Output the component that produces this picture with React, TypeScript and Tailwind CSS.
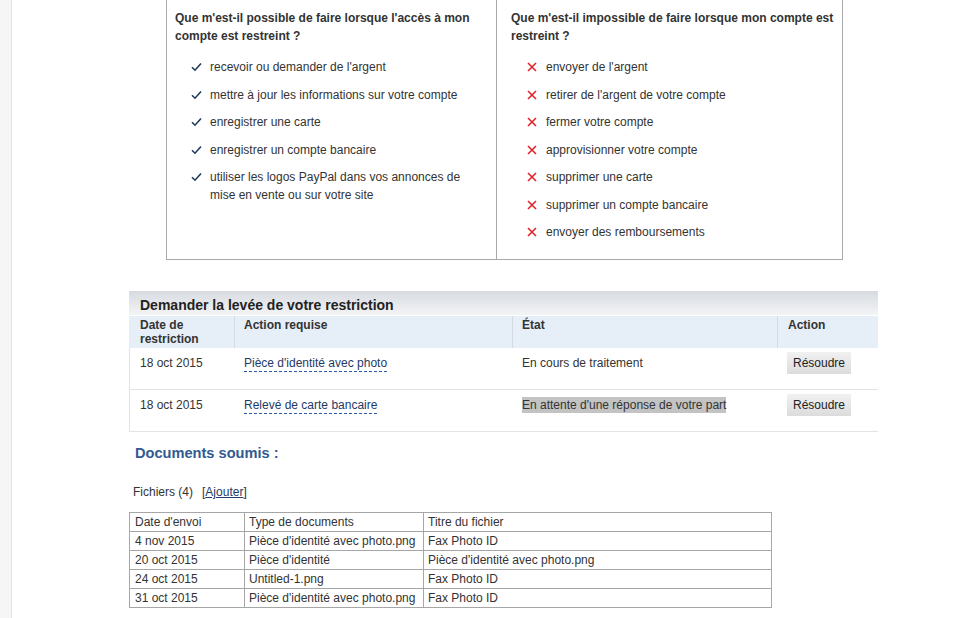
import React from "react";

const Check = () => (
  <svg width="11" height="10" viewBox="0 0 11 10" className="shrink-0">
    <path d="M1 5.2 L4 8.2 L10 1.5" fill="none" stroke="#1f3a5c" strokeWidth="1.6" />
  </svg>
);

const Cross = () => (
  <svg width="10" height="10" viewBox="0 0 10 10" className="shrink-0">
    <path d="M1 1 L9 9 M9 1 L1 9" fill="none" stroke="#e0242b" strokeWidth="1.6" />
  </svg>
);

const can = [
  "recevoir ou demander de l'argent",
  "mettre à jour les informations sur votre compte",
  "enregistrer une carte",
  "enregistrer un compte bancaire",
  "utiliser les logos PayPal dans vos annonces de mise en vente ou sur votre site",
];

const cannot = [
  "envoyer de l'argent",
  "retirer de l'argent de votre compte",
  "fermer votre compte",
  "approvisionner votre compte",
  "supprimer une carte",
  "supprimer un compte bancaire",
  "envoyer des remboursements",
];

const docs = [
  ["4 nov 2015", "Pièce d'identité avec photo.png", "Fax Photo ID"],
  ["20 oct 2015", "Pièce d'identité", "Pièce d'identité avec photo.png"],
  ["24 oct 2015", "Untitled-1.png", "Fax Photo ID"],
  ["31 oct 2015", "Pièce d'identité avec photo.png", "Fax Photo ID"],
];

export default function App() {
  return (
    <div
      className="flex min-h-[618px] w-[970px] bg-white text-[12px] text-[#333]"
      style={{ fontFamily: '"Liberation Sans", Arial, sans-serif' }}
    >
      <div className="w-[12px] shrink-0 border-r border-[#e4e4e4] bg-[#f6f6f6]" />
      <div className="flex flex-col pl-[117px]">
        {/* Top box */}
        <div className="ml-[37px] flex h-[260px] w-[677px] border border-t-0 border-[#a9a9a9]">
          <div className="w-[330px] border-r border-[#a9a9a9] pl-[8px] pr-[10px] pt-[9px]">
            <div className="text-[12px] font-bold leading-[18px] text-[#333]">
              Que m'est-il possible de faire lorsque l'accès à mon compte est restreint ?
            </div>
            <ul className="mt-[13px] flex flex-col gap-[9.5px] pl-[16px]">
              {can.map((t) => (
                <li key={t} className="flex items-start leading-[18px]">
                  <span className="mt-[4px] w-[19px]">
                    <Check />
                  </span>
                  <span className="w-[262px]">{t}</span>
                </li>
              ))}
            </ul>
          </div>
          <div className="flex-1 pl-[14px] pr-[8px] pt-[9px]">
            <div className="text-[12px] font-bold leading-[18px] text-[#333]">
              Que m'est-il impossible de faire lorsque mon compte est restreint ?
            </div>
            <ul className="mt-[13px] flex flex-col gap-[9.5px] pl-[16px]">
              {cannot.map((t) => (
                <li key={t} className="flex items-start leading-[18px]">
                  <span className="mt-[4px] w-[19px]">
                    <Cross />
                  </span>
                  <span>{t}</span>
                </li>
              ))}
            </ul>
          </div>
        </div>

        {/* Restriction section */}
        <div className="mt-[31px] w-[749px]">
          <div className="h-[24px] bg-gradient-to-b from-[#d7dbe0] to-[#f3f4f6] pl-[11px] pt-[6px] text-[14px] font-bold leading-[17px] text-[#222]">
            Demander la levée de votre restriction
          </div>
          <div className="mt-[1px] flex h-[32px] bg-[#e6eef8] text-[12px] font-bold leading-[14px] text-[#333]">
            <div className="w-[105px] pl-[11px] pt-[2px]">
              Date de
              <br />
              restriction
            </div>
            <div className="w-[278px] border-l border-[#d3dae3] pl-[9px] pt-[2px]">Action requise</div>
            <div className="w-[265px] border-l border-[#d3dae3] pl-[9px] pt-[2px]">État</div>
            <div className="flex-1 border-l border-[#d3dae3] pl-[10px] pt-[2px]">Action</div>
          </div>
          {[
            ["Pièce d'identité avec photo", "En cours de traitement", false],
            ["Relevé de carte bancaire", "En attente d'une réponse de votre part", true],
          ].map(([a, s, hl]) => (
            <div
              key={a as string}
              className="flex h-[42px] border-b border-l border-[#e3e3e3] leading-[14px]"
            >
              <div className="w-[105px] pl-[10px] pt-[8px]">18 oct 2015</div>
              <div className="w-[278px] pl-[9px] pt-[8px]">
                <span className="border-b border-dashed border-[#2a5aa8] pb-[1px] text-[#1e3a66]">
                  {a as string}
                </span>
              </div>
              <div className="w-[265px] pl-[9px] pt-[8px]">
                <span className={hl ? "bg-[#c3c3c3] py-[1px]" : ""}>{s as string}</span>
              </div>
              <div className="flex-1 pl-[9px] pt-[4px]">
                <span className="inline-block h-[22px] w-[64px] bg-gradient-to-b from-[#f1f1f1] to-[#dcdcdc] text-center leading-[22px] text-[#222]">
                  Résoudre
                </span>
              </div>
            </div>
          ))}
        </div>

        <div className="ml-[6px] mt-[12px] text-[14.6px] font-bold leading-[18px] text-[#335a90]">
          Documents soumis :
        </div>
        <div className="ml-[4px] mt-[23px] leading-[14px]">
          Fichiers (4)
          <span className="ml-[9px]">
            [<span className="text-[#1e3a66] underline">Ajouter</span>]
          </span>
        </div>
        <table className="mt-[13px] w-[643px] border-collapse text-[12px] leading-[18px]">
          <tbody>
            <tr>
              <td className="w-[115px] border border-[#a6a6a6] pl-[5px]">Date d'envoi</td>
              <td className="w-[179px] border border-[#a6a6a6] pl-[4px]">Type de documents</td>
              <td className="border border-[#a6a6a6] pl-[4px]">Titre du fichier</td>
            </tr>
            {docs.map((r) => (
              <tr key={r[0]}>
                <td className="border border-[#a6a6a6] pl-[5px]">{r[0]}</td>
                <td className="border border-[#a6a6a6] pl-[4px]">{r[1]}</td>
                <td className="border border-[#a6a6a6] pl-[4px]">{r[2]}</td>
              </tr>
            ))}
          </tbody>
        </table>
      </div>
    </div>
  );
}
